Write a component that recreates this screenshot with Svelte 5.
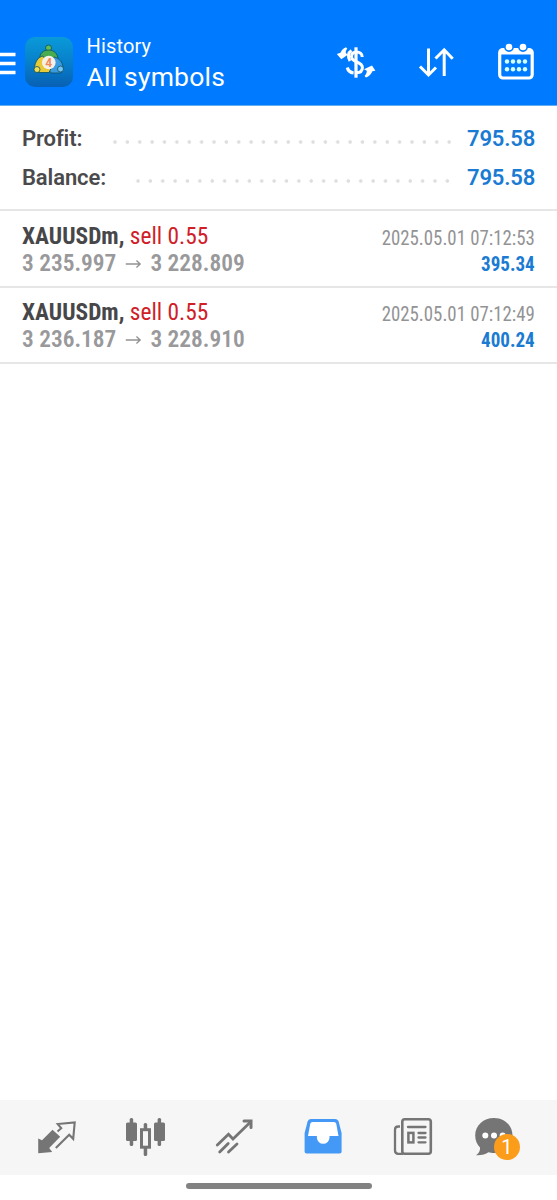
<script>
  const summary = [
    { label: 'Profit:', value: '795.58', indent: 109 },
    { label: 'Balance:', value: '795.58', indent: 132 },
  ]

  const deals = [
    {
      symbol: 'XAUUSDm',
      side: 'sell 0.55',
      open: '3 235.997',
      close: '3 228.809',
      time: '2025.05.01 07:12:53',
      profit: '395.34',
    },
    {
      symbol: 'XAUUSDm',
      side: 'sell 0.55',
      open: '3 236.187',
      close: '3 228.910',
      time: '2025.05.01 07:12:49',
      profit: '400.24',
    },
  ]

  let unread = 1
</script>

<div class="screen">
  <header>
    <svg class="menu" width="16" height="28" viewBox="0 0 16 28">
      <path d="M0 5.5h15.5M0 14.5h15.5M0 23.5h15.5" stroke="#fff" stroke-width="3.4" />
    </svg>
    <svg class="logo" width="50" height="52" viewBox="0 0 50 52">
      <defs>
        <linearGradient id="tile" x1="0" y1="0" x2="0" y2="1">
          <stop offset="0" stop-color="#0a9ad8" />
          <stop offset="0.5" stop-color="#0780cb" />
          <stop offset="1" stop-color="#0860b4" />
        </linearGradient>
      </defs>
      <rect x="1" y="1" width="48" height="50" rx="10" fill="url(#tile)" />
      <g stroke="#0d5060" stroke-width="0.8">
        <circle cx="24.500" cy="12" r="3" fill="#62bd55" />
        <path d="M15.500 24c0-7 4-10 9-10s9.500 3 9.500 10l-4 4H20z" fill="#48ad50" />
        <path d="M30 21c5 1 8.500 5 9 10l-2 6h-10l-4-6z" fill="#3a9be0" />
        <path d="M19 20c-5 1-8 6-8.500 12l1.500 4.500h13l2-4z" fill="#e8ca38" />
        <circle cx="13" cy="33.500" r="3" fill="#f2dc50" />
        <circle cx="36.500" cy="33" r="3" fill="#75c4f3" />
      </g>
      <circle cx="24.800" cy="26.500" r="6.800" fill="#f5f1e8" />
      <text x="24.800" y="30.800" text-anchor="middle" class="logo-digit">4</text>
    </svg>
    <div class="titles">
      <span class="title">History</span>
      <span class="subtitle">All symbols</span>
    </div>
    <div class="actions">
      <svg width="40" height="40" viewBox="336 42 40 40" fill="none" stroke="#fff">
        <path d="M356 47.300v30.400" stroke-width="3.200" />
        <path d="M362.200 57c0-3.500-2.700-5-5.500-5-3.200 0-5.200 1.800-5.200 4.700 0 6.300 10.900 4.300 10.900 10.900 0 3.400-2.400 5.200-5.700 5.200" stroke-width="3" />
        <path d="M351.500 50.500c-3.500 2-4 6.500-1.500 10.500" stroke-width="3" />
        <path d="M347.300 67.500c.8 3.300 3 5 6.300 5.500" stroke-width="3.200" />
        <path d="M336.800 54l3.700-1.200c1-2.500 2.500-4.300 5.500-5.600l1.300 1.600c-1.300 1.200-1.600 2.500-1.500 4.200l2 1.700-6.500 4.500z" fill="#fff" stroke="none" />
        <path d="M375.400 70.700l-3 .6c-1.200 3-3.200 5-6.500 6.200l-1.300-1.500c1.500-1.500 2.200-3.100 2.200-5.200l-2.800-1.500 8-3.800z" fill="#fff" stroke="none" />
      </svg>
      <svg width="40" height="40" viewBox="416 42 40 40" fill="none" stroke="#fff" stroke-width="3">
        <path d="M428.500 48.500v26M420 66.500l8.500 8.500 7.500-7.500M444.200 76V50M435.500 58.500l8.700-8.700 8.500 9" />
      </svg>
      <svg width="40" height="40" viewBox="496 42 40 40">
        <rect x="499.700" y="49.500" width="32.500" height="28.500" rx="3.200" fill="none" stroke="#fff" stroke-width="3.200" />
        <path d="M500 49h32v5.500h-32z" fill="#fff" />
        <g fill="#fff" stroke="#007bff" stroke-width="1.600">
          <circle cx="509" cy="47" r="4.100" />
          <circle cx="523" cy="47" r="4.100" />
        </g>
        <g fill="#d5ffff">
          {#each [61.5, 69.2] as cy}
            {#each [507, 513, 519, 525] as cx}
              <circle {cx} {cy} r="2.200" />
            {/each}
          {/each}
        </g>
      </svg>
    </div>
  </header>

  <section class="summary">
    {#each summary as row}
      <div class="summary-row">
        <span class="label" style="width: {row.indent - 22}px">{row.label}</span>
        <span class="dots"></span>
        <span class="value">{row.value}</span>
      </div>
    {/each}
  </section>

  <main>
    {#each deals as deal}
      <div class="deal">
        <div class="left">
          <div class="name"><b>{deal.symbol},</b> <span>{deal.side}</span></div>
          <div class="prices">
            <span>{deal.open}</span>
            <svg width="17" height="12" viewBox="0 0 17 12">
              <path d="M0.500 7h14.500M11.500 3.500L15.300 7l-3.800 3.500" fill="none" stroke="#929294" stroke-width="1.400" />
            </svg>
            <span>{deal.close}</span>
          </div>
        </div>
        <div class="right">
          <div class="time">{deal.time}</div>
          <div class="profit">{deal.profit}</div>
        </div>
      </div>
    {/each}
  </main>

  <nav>
    <svg width="44" height="44" viewBox="34 1115 44 44">
      <path d="M38.200 1153.300V1138.500l3.800 1.800 10.500-10.500 7.700 6.900-11 11.300 3 4z" fill="#757575" />
      <path d="M57.500 1131.500l3.700-3.300-3.500-4.200 17-1.500-1.500 16.300-4-4.100-13.400 13.300" fill="none" stroke="#757575" stroke-width="2.100" />
    </svg>
    <svg width="44" height="44" viewBox="123 1115 44 44">
      <g fill="#757575">
        <rect x="126" y="1122.500" width="11" height="18.500" rx="1.500" />
        <rect x="129.700" y="1118" width="3.500" height="28" rx="1.500" />
        <rect x="154" y="1122.500" width="11" height="18.500" rx="1.500" />
        <rect x="157.600" y="1118" width="3.500" height="28" rx="1.500" />
        <rect x="143.700" y="1123" width="3.500" height="33" rx="1.500" />
      </g>
      <rect x="141.500" y="1129.700" width="8" height="17.500" fill="#f6f6f6" stroke="#757575" stroke-width="3" />
    </svg>
    <svg width="44" height="44" viewBox="212 1115 44 44" fill="none" stroke="#757575" stroke-width="2.800" stroke-linecap="round">
      <path d="M217.300 1145l11.200-10.800 4.500 4.800 17-16.500" stroke-linejoin="miter" />
      <path d="M244 1121h7v6.500" stroke-width="3" />
      <path d="M219.700 1152l8.500-8.500M228.500 1152l8.500-8" />
    </svg>
    <svg width="44" height="44" viewBox="302 1115 44 44">
      <path d="M311 1119h24c2 0 3 1 3.600 2.500l3 11.500v18.500q0 2-2 2h-33q-2 0-2-2V1133l3-11.500c.6-1.500 1.600-2.500 3.400-2.500z" fill="#4399f5" />
      <path d="M312.500 1122h21.500q1.600 0 2.200 1.500l2.300 12.500h-9v1.500a6.300 6.300 0 0 1-12.600 0v-1.500h-8.900l2.300-12.500q.5-1.500 2.200-1.500z" fill="#fff" />
    </svg>
    <svg width="44" height="44" viewBox="391 1115 44 44" fill="none" stroke="#757575">
      <rect x="402.300" y="1119.300" width="28.500" height="34.500" rx="2.500" stroke-width="2.600" />
      <path d="M400 1126.500h-1.700q-3.300 0-3.300 3.300v20.700q0 3.300 3.300 3.300h5" stroke-width="2.300" />
      <path d="M408 1127h17.500M418.500 1133h7M418.500 1137.500h7M418.500 1142.300h7" stroke-width="2.300" stroke-linecap="round" />
      <rect x="408.400" y="1132.900" width="5" height="9.500" stroke-width="2.500" />
    </svg>
    <div class="chat">
      <svg width="44" height="44" viewBox="473 1115 44 44">
        <path d="M494 1118c10.500 0 18.500 7.300 18.500 17.500s-8 17.500-18.500 17.500c-2 0-4-.3-5.500-.8-3 2-7 3.300-12.500 3 3.300-2.300 4.300-5 4-7.700-3-3-4.800-7.200-4.800-12 0-10.200 8.300-17.500 18.800-17.500z" fill="#757575" />
        <g fill="#fff">
          <circle cx="485.300" cy="1135.500" r="3" />
          <circle cx="494" cy="1135.500" r="3" />
          <circle cx="502.700" cy="1135.500" r="3" />
        </g>
      </svg>
      <span class="badge">{unread}</span>
    </div>
  </nav>
  <div class="home"><i></i></div>
</div>

<style>
  :global(body) {
    background: #fff;
  }

  .screen {
    display: flex;
    flex-direction: column;
    width: 557px;
    height: 1200px;
    overflow: hidden;
    background: #fff;
    font-family: Roboto, 'Liberation Sans', sans-serif;
    box-sizing: border-box;
  }

  svg {
    display: block;
    flex: none;
  }

  header {
    display: flex;
    box-sizing: border-box;
    height: 106px;
    padding-top: 36px;
    background: #007bff;
    border-bottom: 1px solid #65aeee;
    color: #fff;
  }

  .menu {
    margin-top: 13px;
  }

  .logo {
    margin-left: 8px;
  }

  .logo-digit {
    font: bold 12px Roboto, sans-serif;
    fill: #ee8a55;
  }

  .titles {
    display: flex;
    flex-direction: column;
    margin-left: 12.5px;
    white-space: nowrap;
  }

  .title {
    font-size: 20px;
    line-height: 20px;
    letter-spacing: 0.15px;
  }

  .subtitle {
    margin-top: 6px;
    font-size: 26.5px;
    line-height: 30px;
    letter-spacing: 0.2px;
  }

  .actions {
    display: flex;
    gap: 40px;
    margin: 6px 21px 0 auto;
  }

  .summary {
    box-sizing: border-box;
    height: 105px;
    padding: 13px 22px 0;
    border-bottom: 2px solid #e6e6e6;
  }

  .summary-row {
    display: flex;
    height: 38.5px;
    line-height: 40px;
    font-size: 22px;
    font-weight: 600;
    color: #4a4a4c;
  }

  .label {
    letter-spacing: -0.1px;
    white-space: nowrap;
  }

  .dots {
    flex: 1;
    height: 12px;
    margin: 17px 14px 0 0;
    background: radial-gradient(circle at 6px 6px, #dedede 1.4px, transparent 2.1px) 0 0 / 12.38px 12px repeat-x;
  }

  .value {
    width: 68px;
    text-align: right;
    letter-spacing: -0.15px;
    color: #1a7bd3;
  }

  .deal {
    display: flex;
    justify-content: space-between;
    box-sizing: border-box;
    height: 76px;
    padding: 12px 22px 0;
    border-bottom: 2px solid #e6e6e6;
    white-space: nowrap;
  }

  .deal:first-child {
    height: 77px;
    padding-top: 13px;
  }

  .left,
  .right {
    font-family: 'Roboto Condensed', Roboto, 'Liberation Sans', sans-serif;
    font-stretch: 75%;
  }

  .name {
    margin-top: -1px;
    font-size: 24.5px;
    line-height: 26px;
    color: #d02027;
    transform: scaleX(0.954);
    transform-origin: left;
  }

  .name b {
    color: #47474a;
  }

  .prices {
    display: flex;
    align-items: center;
    gap: 9px;
    margin-top: 1px;
    font-size: 24px;
    line-height: 26px;
    font-weight: 600;
    color: #99999b;
    transform: scaleX(0.974);
    transform-origin: left;
  }

  .right {
    text-align: right;
  }

  .time {
    font-size: 20.5px;
    line-height: 28px;
    color: #939395;
    transform: scaleX(0.918);
    transform-origin: right;
  }

  .profit {
    font-size: 20.5px;
    line-height: 25px;
    font-weight: 700;
    color: #1a7bd3;
    transform: scaleX(0.93);
    transform-origin: right;
  }

  nav {
    display: flex;
    justify-content: space-between;
    box-sizing: border-box;
    height: 75px;
    margin-top: auto;
    padding: 15px 40px 0 34px;
    background: #f6f6f6;
  }

  .chat {
    position: relative;
    margin-left: -7px;
  }

  .badge {
    position: absolute;
    left: 21px;
    top: 19px;
    width: 26px;
    height: 26px;
    border-radius: 50%;
    background: #fb9d1b;
    color: #fff;
    font-size: 20px;
    line-height: 26px;
    text-align: center;
  }

  .home {
    display: flex;
    justify-content: center;
    height: 25px;
    padding-top: 8px;
    box-sizing: border-box;
  }

  .home i {
    width: 186px;
    height: 6px;
    border-radius: 3px;
    background: #828282;
  }
</style>
